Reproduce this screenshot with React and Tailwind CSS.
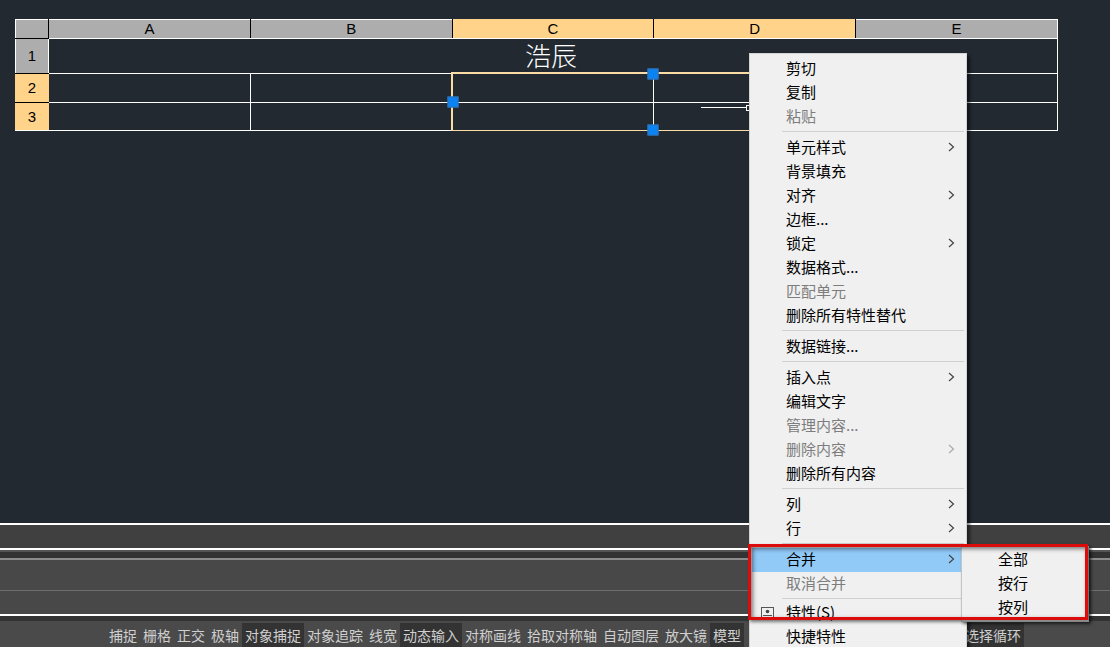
import React from 'react'

const columns = [
  { name: 'A' },
  { name: 'B' },
  { name: 'C', selected: true },
  { name: 'D', selected: true },
  { name: 'E' },
]

const menuGroups = [
  [{ label: '剪切' }, { label: '复制' }, { label: '粘贴', disabled: true }],
  [
    { label: '单元样式', arrow: true },
    { label: '背景填充' },
    { label: '对齐', arrow: true },
    { label: '边框...' },
    { label: '锁定', arrow: true },
    { label: '数据格式...' },
    { label: '匹配单元', disabled: true },
    { label: '删除所有特性替代' },
  ],
  [{ label: '数据链接...' }],
  [
    { label: '插入点', arrow: true },
    { label: '编辑文字' },
    { label: '管理内容...', disabled: true },
    { label: '删除内容', arrow: true, disabled: true },
    { label: '删除所有内容' },
  ],
  [{ label: '列', arrow: true }, { label: '行', arrow: true }],
  [
    { label: '合并', arrow: true, submenu: ['全部', '按行', '按列'] },
    { label: '取消合并', disabled: true },
  ],
  [{ label: '特性(S)', icon: true }, { label: '快捷特性' }],
]

const toggles = [
  { label: '捕捉' },
  { label: '栅格' },
  { label: '正交' },
  { label: '极轴' },
  { label: '对象捕捉', on: true },
  { label: '对象追踪' },
  { label: '线宽' },
  { label: '动态输入', on: true },
  { label: '对称画线' },
  { label: '拾取对称轴' },
  { label: '自动图层' },
  { label: '放大镜' },
  { label: '模型', on: true },
]

function Chevron() {
  return (
    <svg width="7" height="10" viewBox="0 0 7 10" fill="none" stroke="currentColor" strokeWidth="1.2">
      <path d="M1 1l4.5 4L1 9" />
    </svg>
  )
}

function PropertiesIcon() {
  return (
    <svg className="absolute left-[11px] top-1.5" width="13" height="13" viewBox="0 0 13 13" fill="none" stroke="#555">
      <rect x="0.5" y="0.5" width="12" height="12" />
      <circle cx="6.5" cy="4.5" r="1.8" fill="#444" stroke="none" />
      <path d="M2 8.5h9M2 10.5h9" />
    </svg>
  )
}

function Grip({ className }) {
  return <span className={'absolute w-[11px] h-[11px] bg-[#0a84f5] border border-[#3273b4] ' + className} />
}

/* Selected range C2:D3 */
function Selection() {
  return (
    <div className="absolute z-10 -left-0.5 -top-0.5 w-[calc(200%+3px)] h-[calc(200%+3px)]">
      <div className="absolute inset-0 border-2 border-b border-[#fbdca5]" />
      <Grip className="left-1/2 top-0.5 -translate-x-1/2 -translate-y-1/2" />
      <Grip className="left-0.5 top-1/2 -translate-x-1/2 -translate-y-1/2" />
      <Grip className="left-1/2 bottom-px -translate-x-1/2 translate-y-1/2" />
    </div>
  )
}

function RowHead({ n, selected }) {
  return (
    <th
      scope="row"
      className={
        'border-b font-normal text-black ' +
        (selected ? 'bg-[#ffd38a] border-x border-x-[#ffd38a] ' : 'bg-[#adadad] border-x border-x-white ') +
        (n === 3 ? 'border-b-white' : 'border-b-black')
      }
    >
      {n}
    </th>
  )
}

function CadTable() {
  return (
    <table className="w-full table-fixed border-collapse font-['Liberation_Sans',sans-serif] text-[15px] leading-4">
      <colgroup>
        <col className="w-[33px]" />
        <col /><col /><col /><col /><col />
      </colgroup>
      <thead>
        <tr className="h-[19px]">
          <td className="p-0 bg-[#adadad] border border-t-white border-l-white border-r-black border-b-black" />
          {columns.map((c) => (
            <th
              key={c.name}
              scope="col"
              className={
                'p-0 font-normal text-black border border-b-white ' +
                (c.selected ? 'bg-[#ffd38a] border-t-[#ffd38a] ' : 'bg-[#adadad] border-t-white ') +
                (c.name === 'E' ? 'border-r-white' : 'border-r-black')
              }
            >
              {c.name}
            </th>
          ))}
        </tr>
      </thead>
      <tbody>
        <tr className="h-[35px]">
          <RowHead n={1} />
          <td
            colSpan={5}
            className="p-0 pb-0.5 pr-1 border border-white text-center text-white text-[26px] leading-8 font-light font-['Noto_Sans_CJK_SC',serif]"
          >
            浩辰
          </td>
        </tr>
        <tr className="h-[29px]">
          <RowHead n={2} selected />
          <td className="border border-white" />
          <td className="border border-white" />
          <td className="relative p-0 border border-white"><Selection /></td>
          <td className="border border-white" />
          <td className="border border-white" />
        </tr>
        <tr className="h-7">
          <RowHead n={3} selected />
          <td className="border border-white" />
          <td className="border border-white" />
          <td className="border border-white" />
          <td className="relative p-0 border border-white">
            <svg className="absolute left-[47px] top-0" width="52" height="10" viewBox="0 0 52 10" fill="none" stroke="#fff">
              <path d="M0 4.5h46" />
              <rect x="45.5" y="2.5" width="5" height="5" />
            </svg>
          </td>
          <td className="border border-white" />
        </tr>
      </tbody>
    </table>
  )
}

function Submenu({ items }) {
  return (
    <div role="menu" className="absolute left-[211px] -top-0.5 w-32 pb-0.5 border border-[#c4c4c4] bg-[#f0f0f0] shadow-[2px_2px_3px_rgba(0,0,0,0.5)]">
      {items.map((label) => (
        <button key={label} role="menuitem" className="block w-full h-6 pl-9 text-left">
          {label}
        </button>
      ))}
    </div>
  )
}

function MenuItem({ item }) {
  const open = Boolean(item.submenu)
  return (
    <div className="relative">
      <button
        role="menuitem"
        disabled={item.disabled}
        className={
          'flex items-center justify-between h-6 pb-0.5 text-left ' +
          (open ? 'ml-0.5 w-[209px] pl-[34px] pr-1.5 bg-[#91c9f7] ' : 'w-full pl-9 pr-[11px] ') +
          (item.disabled ? 'text-[#7d7d7d]' : 'text-black')
        }
      >
        {item.icon && <PropertiesIcon />}
        {item.label}
        {item.arrow && (
          <span className={item.disabled ? 'text-[#aaa]' : 'text-[#444]'}>
            <Chevron />
          </span>
        )}
      </button>
      {open && <Submenu items={item.submenu} />}
      {/* Highlight around the merge commands */}
      {open && (
        <div className="absolute z-10 -left-0.5 -top-1 w-[340px] h-[76px] border-[3px] border-[#dc0c0c] pointer-events-none shadow-[2px_2px_3px_rgba(0,0,0,0.5),inset_2px_2px_4px_rgba(0,0,0,0.5)]" />
      )}
    </div>
  )
}

function ContextMenu() {
  return (
    <div
      role="menu"
      className="absolute z-20 left-[749px] top-[53px] w-[218px] py-[3px] border border-[#d4d4d4] bg-[#f0f0f0] text-[15px] leading-6 shadow-[3px_3px_3px_rgba(0,0,0,0.5)]"
    >
      {menuGroups.map((group, i) => (
        <div key={i}>
          {i > 0 && (
            <div className={'pt-0.5 pl-8 pr-0.5 ' + (i === menuGroups.length - 1 ? 'h-[5px]' : 'h-[7px]')}>
              <div className="h-px bg-[#d0d0d0]" />
            </div>
          )}
          {group.map((item) => (
            <MenuItem key={item.label} item={item} />
          ))}
        </div>
      ))}
    </div>
  )
}

function CommandPanel() {
  return (
    <div className="bg-[#484848]">
      <div className="h-[27px] border-y-2 border-white bg-[#404040]" />
      <div className="h-2 border-t-2 border-[#555] bg-[#333]" />
      <div className="h-8 border-t-2 border-[#8c8c8c]" />
      <input
        aria-label="命令"
        className="block w-full h-[26px] px-2 border-t border-b-2 border-t-[#6e6e6e] border-b-white text-sm text-white outline-none"
      />
      <div className="h-[5px] bg-[#333]" />
    </div>
  )
}

function StatusBar() {
  return (
    <div className="flex pt-0.5 pl-[106px] bg-[#4a4a4a] text-sm leading-6 text-[#cfcfcf] whitespace-nowrap">
      {toggles.map((t) => (
        <button key={t.label} aria-pressed={Boolean(t.on)} className={'shrink-0 h-6 px-[3px] ' + (t.on ? 'bg-[#333]' : '')}>
          {t.label}
        </button>
      ))}
      <button aria-pressed="true" className="shrink-0 h-6 ml-[218px] px-[3px] bg-[#333]">
        选择循环
      </button>
    </div>
  )
}

export default function App() {
  return (
    <div className="relative flex flex-col h-screen overflow-hidden bg-[#222931] font-['Noto_Sans_CJK_SC',sans-serif]">
      <main className="flex-1 pt-[19px] pl-[15px] pr-[52px]">
        <CadTable />
      </main>
      <CommandPanel />
      <StatusBar />
      <ContextMenu />
    </div>
  )
}
